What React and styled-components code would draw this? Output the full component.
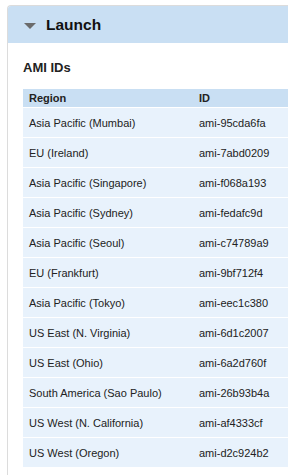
import React from "react";
import styled, { createGlobalStyle } from "styled-components";

const Global = createGlobalStyle`
  html, body { margin: 0; padding: 0; background: #fff; overflow: hidden; }
  body { font-family: "Liberation Sans", Arial, Helvetica, sans-serif; color: #222; }
`;

const Panel = styled.section`
  margin: 5px 0 0 7px;
  width: 281px;
  min-height: 475px;
  border: 1px solid #dcdcdc;
  border-right: none;
  border-bottom: none;
  border-top-left-radius: 4px;
  overflow: hidden;
  box-sizing: border-box;
`;

const PanelHeader = styled.div`
  height: 37px;
  background: #c9dff3;
  display: flex;
  align-items: center;
  padding-left: 16px;
  gap: 10px;
`;

const Caret = styled.span`
  width: 0;
  height: 0;
  border-left: 6px solid transparent;
  border-right: 6px solid transparent;
  border-top: 6px solid #6b6b6b;
  margin-top: 2px;
`;

const Title = styled.h2`
  margin: 0;
  font-size: 15.5px;
  font-weight: bold;
  color: #111;
`;

const Body = styled.div`
  padding: 17px 0 0 15px;
`;

const SubTitle = styled.h3`
  margin: 0 0 14px;
  font-size: 13px;
  font-weight: bold;
  color: #222;
  line-height: 15px;
`;

const Table = styled.table`
  border-collapse: collapse;
  width: 360px;
  font-size: 11px;
`;

const Th = styled.th`
  background: #c9dff3;
  text-align: left;
  font-weight: bold;
  height: 18px;
  padding: 0 6px;
  color: #222;
  width: ${(p) => p.$w || "auto"};
`;

const Tr = styled.tr`
  border-top: 1px solid #fff;
`;

const Td = styled.td`
  background: #e8f2fc;
  height: 29px;
  padding: 0 6px;
  color: #222;
`;

const rows = [
  ["Asia Pacific (Mumbai)", "ami-95cda6fa"],
  ["EU (Ireland)", "ami-7abd0209"],
  ["Asia Pacific (Singapore)", "ami-f068a193"],
  ["Asia Pacific (Sydney)", "ami-fedafc9d"],
  ["Asia Pacific (Seoul)", "ami-c74789a9"],
  ["EU (Frankfurt)", "ami-9bf712f4"],
  ["Asia Pacific (Tokyo)", "ami-eec1c380"],
  ["US East (N. Virginia)", "ami-6d1c2007"],
  ["US East (Ohio)", "ami-6a2d760f"],
  ["South America (Sao Paulo)", "ami-26b93b4a"],
  ["US West (N. California)", "ami-af4333cf"],
  ["US West (Oregon)", "ami-d2c924b2"],
];

export default function App() {
  return (
    <>
      <Global />
      <Panel>
        <PanelHeader>
          <Caret />
          <Title>Launch</Title>
        </PanelHeader>
        <Body>
          <SubTitle>AMI IDs</SubTitle>
          <Table>
            <thead>
              <tr>
                <Th $w="158px">Region</Th>
                <Th>ID</Th>
              </tr>
            </thead>
            <tbody>
              {rows.map(([r, id]) => (
                <Tr key={id}>
                  <Td>{r}</Td>
                  <Td>{id}</Td>
                </Tr>
              ))}
            </tbody>
          </Table>
        </Body>
      </Panel>
    </>
  );
}
